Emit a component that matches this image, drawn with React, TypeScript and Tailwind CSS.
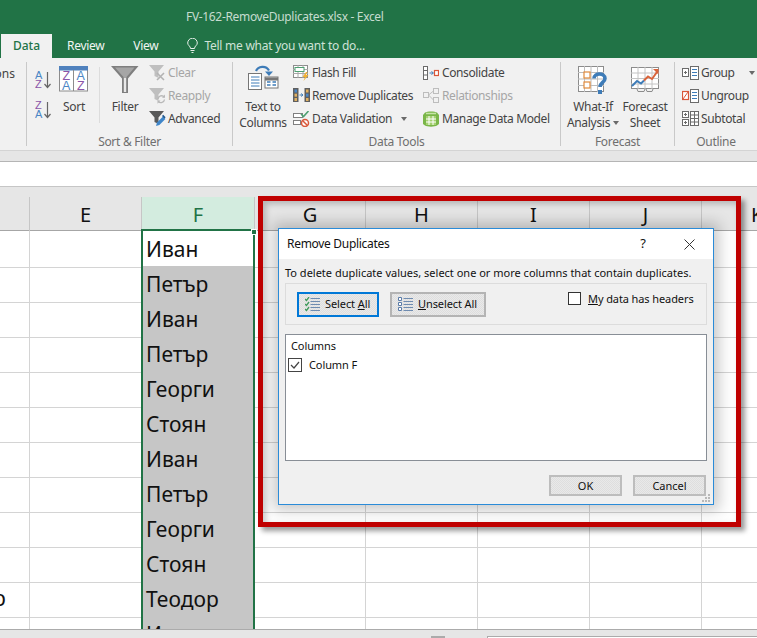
import React from "react";

const ui = "font-['Open_Sans','Noto_Sans',sans-serif]";

const AZ = ({ flip }: { flip?: boolean }) => (
  <svg width="16" height="21" viewBox="0 0 16 21" className="block">
    <text x="0" y="10" fontSize="11" fontFamily="Liberation Sans" fill={flip ? "#8a55a8" : "#4a86c5"}>{flip ? "Z" : "A"}</text>
    <text x="0" y="18.500" fontSize="11" fontFamily="Liberation Sans" fill={flip ? "#4a86c5" : "#8a55a8"}>{flip ? "A" : "Z"}</text>
    <path d="M12.500 3v15M9.500 15l3 3.500 3-3.500" fill="none" stroke="#666" strokeWidth="1.200" />
  </svg>
);

const SortIcon = () => (
  <svg width="30" height="27" viewBox="0 0 30 27" className="block">
    <rect x="0.500" y="0.500" width="28" height="24.500" fill="#fff" stroke="#8c8c8c" />
    <rect x="0" y="0" width="29" height="4.500" fill="#4f81bd" />
    <path d="M14.500 4v21" stroke="#8c8c8c" />
    <g fontSize="12.500" fontFamily="Liberation Sans">
      <text x="3.500" y="14.300" fill="#8a55a8">Z</text>
      <text x="17.500" y="14.300" fill="#4a86c5">A</text>
      <text x="3" y="24" fill="#4a86c5">A</text>
      <text x="18" y="24" fill="#8a55a8">Z</text>
    </g>
  </svg>
);

const FilterIcon = () => (
  <svg width="28" height="28" viewBox="0 0 28 28" className="block">
    <path d="M0 0h27.500L17 12.500V27h-6V12.500z" fill="#7f7f7f" />
    <path d="M4 1.500h19.500L15.500 11v15h-3V11z" fill="#a6a6a6" />
    <path d="M13 12h2v14h-2z" fill="#e8e8e8" />
  </svg>
);

const Funnel = ({ c }: { c: string }) => <path d="M0 0h15L9.500 6.500V13l-4-2V6.500z" fill={c} />;

const ClearIcon = () => (
  <svg width="17" height="16" viewBox="0 0 17 16" className="block">
    <Funnel c="#bfbfbf" />
    <path d="M8 8l7 7M15 8l-7 7" stroke="#b3b3b3" strokeWidth="1.600" />
  </svg>
);

const ReapplyIcon = () => (
  <svg width="17" height="16" viewBox="0 0 17 16" className="block">
    <Funnel c="#bfbfbf" />
    <path d="M9 11a3.600 3.600 0 0 1 6.300-2M15.500 11.500a3.600 3.600 0 0 1-6.200 2" fill="none" stroke="#b8b8b8" strokeWidth="1.300" />
    <path d="M16 6.500v3.300h-3zM8.500 15.800v-3.300h3z" fill="#b8b8b8" />
  </svg>
);

const AdvancedIcon = () => (
  <svg width="17" height="16" viewBox="0 0 17 16" className="block">
    <Funnel c="#595959" />
    <path d="M7 15l1-3.500 6-6 2.400 2.400-6 6z" fill="#3f86c9" />
    <path d="M13 5l1.200-1.200 2.400 2.400L15.400 7.400z" fill="#20588f" />
  </svg>
);

const TextColumnsIcon = () => (
  <svg width="31" height="26" viewBox="0 0 31 26" className="block">
    <path d="M8 6c2-5 10-6 13-.5" fill="none" stroke="#3e7cb8" strokeWidth="2.200" />
    <path d="M17 6.500h8l-4 4.500z" fill="#3e7cb8" />
    <rect x="0.500" y="8.500" width="13" height="16" fill="#fff" stroke="#767676" />
    <path d="M3 12h8.500M3 15h8.500M3 18h8.500M3 21h8.500" stroke="#3e7cb8" />
    <rect x="17" y="12" width="13" height="11" fill="#fff" stroke="#767676" />
    <path d="M17 14h13" stroke="#767676" strokeWidth="3" />
    <path d="M19 17h3.500M24.500 17h3.500M19 20h3.500M24.500 20h3.500" stroke="#3e7cb8" strokeWidth="1.600" />
  </svg>
);

const FlashFillIcon = () => (
  <svg width="17" height="16" viewBox="0 0 17 16" className="block">
    <rect x="0.500" y="0.500" width="14" height="12" fill="#fff" stroke="#8c8c8c" />
    <path d="M0 4.500h15M0 8.500h15M5 0v13M10 0v13" stroke="#a8a8a8" />
    <rect x="2" y="2.500" width="9" height="4" fill="#fff" stroke="#4ea072" />
    <path d="M13 7l-3.500 5H12l-1.500 4 5-6H13l1.500-3z" fill="#f2b233" />
  </svg>
);

const RemoveDupIcon = () => (
  <svg width="17" height="15" viewBox="0 0 17 15" className="block">
    <rect x="0" y="0" width="5.500" height="14" fill="#5f5f5f" />
    <rect x="1.500" y="1.500" width="2.500" height="3" fill="#4a86c5" />
    <rect x="1.500" y="5.700" width="2.500" height="3" fill="#e0b060" />
    <rect x="1.500" y="10" width="2.500" height="3" fill="#e0b060" />
    <rect x="11.500" y="0" width="5.500" height="14" fill="#5f5f5f" />
    <rect x="13" y="1.500" width="2.500" height="3" fill="#e0b060" />
    <rect x="13" y="5.700" width="2.500" height="3" fill="#4a86c5" />
    <rect x="13" y="10" width="2.500" height="3" fill="#e0b060" />
    <path d="M6.500 7h3M8.200 5.500L10 7 8.200 8.500" fill="none" stroke="#3e7cb8" />
  </svg>
);

const ValidationIcon = () => (
  <svg width="17" height="16" viewBox="0 0 17 16" className="block">
    <rect x="0.500" y="2.500" width="9" height="4" fill="#fff" stroke="#7f7f7f" />
    <rect x="0.500" y="9.500" width="7" height="4" fill="#fff" stroke="#7f7f7f" />
    <path d="M8 3l2.500 2.500L15.500 0" fill="none" stroke="#4ea072" strokeWidth="1.600" />
    <circle cx="12" cy="12" r="3.500" fill="#fff" stroke="#d9573a" strokeWidth="1.500" />
    <path d="M9.500 9.500l5 5" stroke="#d9573a" strokeWidth="1.500" />
  </svg>
);

const ConsolidateIcon = () => (
  <svg width="16" height="14" viewBox="0 0 16 14" className="block">
    <rect x="0.500" y="0.500" width="4" height="13" fill="#fff" stroke="#6b6b6b" />
    <path d="M0 4.500h5M0 9h5" stroke="#6b6b6b" />
    <path d="M6.500 7h3.500M8.500 5.500L10.500 7 8.500 8.500" fill="none" stroke="#3e7cb8" />
    <rect x="11.500" y="4.500" width="4" height="5" fill="#fff" stroke="#d9573a" strokeWidth="1.200" />
  </svg>
);

const RelationshipsIcon = () => (
  <svg width="16" height="15" viewBox="0 0 16 15" className="block">
    <g fill="#f1f1f1" stroke="#bdbdbd">
      <rect x="0.500" y="4.500" width="5" height="5" />
      <rect x="10.500" y="0.500" width="5" height="5" />
      <rect x="10.500" y="9.500" width="5" height="5" />
    </g>
    <path d="M5.500 7L10.500 3M5.500 7l5 5" stroke="#bdbdbd" />
  </svg>
);

const DataModelIcon = () => (
  <svg width="16" height="16" viewBox="0 0 16 16" className="block">
    <path d="M2 1.500C4 0 12 0 14 1.500L16 4v9l-2 1.500C12 16 4 16 2 14.500L0 13V4z" fill="#7ab648" />
    <path d="M3 5h10v9H3z" fill="#a4d070" />
    <path d="M6 5v9M10 5v9M3 8h10M3 11h10" stroke="#fff" />
    <path d="M3 2.500h10" stroke="#c6e4a6" strokeWidth="1.500" />
  </svg>
);

const WhatIfIcon = () => (
  <svg width="30" height="30" viewBox="0 0 30 30" className="block">
    <rect x="0.500" y="0.500" width="25" height="25" fill="#fff" stroke="#8c8c8c" />
    <path d="M0 6.500h26M0 13h26M0 19.500h26M6.500 0v26M13 0v26M19.500 0v26" stroke="#bdbdbd" />
    <rect x="6" y="6" width="6" height="6" fill="#fff" stroke="#e08a3c" strokeWidth="1.200" />
    <rect x="6" y="16" width="6" height="6" fill="#fff" stroke="#e08a3c" strokeWidth="1.200" />
    <path d="M16 12.500c0-6 11-6 11 0 0 4-5 4-5 8.500" fill="none" stroke="#3e7cb8" strokeWidth="3.600" />
    <rect x="20" y="24" width="4" height="4" fill="#3e7cb8" />
  </svg>
);

const ForecastIcon = () => (
  <svg width="29" height="26" viewBox="0 0 29 26" className="block">
    <rect x="0.500" y="1.500" width="27" height="21" fill="#fff" stroke="#8c8c8c" />
    <path d="M0 7h28M0 12.500h28M0 18h28M7 1v22M14 1v22M21 1v22" stroke="#c4c4c4" />
    <path d="M1 20l5-5 4 2.500 3-3" fill="none" stroke="#3e7cb8" strokeWidth="2" />
    <path d="M13 14.500l4-4 4 2.500 5-7" fill="none" stroke="#d9633a" strokeWidth="2" />
    <path d="M22 3h5.500v5.500z" fill="#d9633a" />
    <path d="M6 23l1 2.500h6l1-2.500M15 23l1 2.500h5l1-2.500" fill="none" stroke="#8c8c8c" />
  </svg>
);

const ListBox = () => (
  <g>
    <rect x="8.500" y="0.500" width="8" height="13" fill="#fff" stroke="#6b6b6b" />
    <path d="M10 3.500h5M10 6.500h5M10 9.500h5" stroke="#3e7cb8" />
  </g>
);

const GroupIcon = () => (
  <svg width="17" height="14" viewBox="0 0 17 14" className="block">
    <rect x="0.500" y="2.500" width="6" height="8" fill="#fff" stroke="#6b6b6b" />
    <path d="M2 6.500h3M3.500 5v3" stroke="#6b6b6b" />
    <ListBox />
  </svg>
);

const UngroupIcon = () => (
  <svg width="17" height="14" viewBox="0 0 17 14" className="block">
    <rect x="0.500" y="2.500" width="6" height="8" fill="#fff" stroke="#d9573a" strokeWidth="1.200" />
    <path d="M1 10l5-7" stroke="#d9573a" />
    <ListBox />
  </svg>
);

const SubtotalIcon = () => (
  <svg width="17" height="15" viewBox="0 0 17 15" className="block">
    <rect x="0.500" y="0.500" width="6" height="6" fill="#fff" stroke="#6b6b6b" />
    <rect x="0.500" y="8.500" width="6" height="6" fill="#fff" stroke="#6b6b6b" />
    <path d="M2 3.500h3M3.500 2v3M2 11.500h3M3.500 10v3" stroke="#6b6b6b" />
    <rect x="8.500" y="0.500" width="8" height="14" fill="#fff" stroke="#6b6b6b" />
    <path d="M8 4h9M8 7.500h9M8 11h9M12.500 0v15" stroke="#6b6b6b" />
  </svg>
);

const Bulb = () => (
  <svg width="11" height="15" viewBox="0 0 11 15" className="block">
    <path d="M3.500 10.500C3.500 8 .7 7.500.7 5a4.800 4.800 0 0 1 9.600 0c0 2.500-2.800 3-2.800 5.500z" fill="none" stroke="#e8f0ea" />
    <path d="M3.500 12.500h4M4.500 14.500h2" stroke="#e8f0ea" />
  </svg>
);

const Caret = () => <span className="inline-block w-0 h-0 border-x-[3.5px] border-x-transparent border-t-[4px] border-t-[#6a6a6a]" />;

const SelectAllIcon = () => (
  <svg width="16" height="15" viewBox="0 0 16 15" className="block">
    <path d="M0 2l1.500 1.500L4 0M0 7l1.500 1.500L4 5M0 12l1.500 1.500L4 10" fill="none" stroke="#3f9a5c" strokeWidth="1.300" />
    <path d="M5.500 1.500H15M5.500 4.500H15M5.500 7.500H15M5.500 10.500H15M5.500 13.500H15" stroke="#6f8cb0" />
  </svg>
);

const UnselectAllIcon = () => (
  <svg width="16" height="15" viewBox="0 0 16 15" className="block">
    <path d="M.5.5h3v3h-3zM.5 5.500h3v3h-3zM.5 10.500h3v3h-3z" fill="#fff" stroke="#5b7ca8" />
    <path d="M5.500 1.500H15M5.500 4.500H15M5.500 7.500H15M5.500 10.500H15M5.500 13.500H15" stroke="#6f8cb0" />
  </svg>
);

const Sep = () => <div className="w-px h-[84px] mt-1 bg-[#c9c9c9] shrink-0" />;

const GroupLabel = ({ children }: { children: string }) => (
  <div className="h-[17px] leading-[17px] text-center text-[#6f6f6f] tracking-[-0.3px]">{children}</div>
);

const Small = ({ icon, text, off, caret }: { icon: React.ReactNode; text: string; off?: boolean; caret?: string }) => (
  <div className={`h-[23px] flex items-center whitespace-nowrap tracking-[-0.38px] ${off ? "text-[#a6a6a6]" : "text-[#444]"}`}>
    <div className="w-[19px] shrink-0">{icon}</div>
    <span>{text}</span>
    {caret && <span className={`flex ${caret}`}><Caret /></span>}
  </div>
);

const Big = ({ w, icon, iconCls, children }: { w: string; icon: React.ReactNode; iconCls?: string; children: React.ReactNode }) => (
  <div className={`${w} shrink-0 flex flex-col items-center text-[#444] leading-4 whitespace-nowrap tracking-[-0.3px]`}>
    <div className={`h-[38px] ${iconCls ?? "pt-[3px]"}`}>{icon}</div>
    {children}
  </div>
);

const Ribbon = () => (
  <div className={`h-[92px] bg-[#f1f1f1] flex text-[12px] ${ui}`}>
    <div className="w-[26px] shrink-0 overflow-hidden flex justify-end">
      <div className="pr-[11px] pt-[4px] h-[23px] text-[#444] leading-[23px]">ons</div>
    </div>
    <Sep />
    <div className="w-[205px] shrink-0 flex flex-col">
      <div className="h-[75px] pt-[3px] flex">
        <div className="ml-[8px] w-[16px] shrink-0 pt-[8px] flex flex-col gap-[9px]">
          <AZ />
          <AZ flip />
        </div>
        <Big w="w-[30px] ml-[8px]" icon={<SortIcon />} iconCls="pt-[5px]">Sort</Big>
        <div className="w-px h-[56px] mt-[6px] ml-[10px] bg-[#dcdcdc]" />
        <Big w="w-[34px] ml-[8px]" icon={<FilterIcon />} iconCls="pt-[5px]">Filter</Big>
        <div className="ml-[7px]">
          <Small icon={<ClearIcon />} text="Clear" off />
          <Small icon={<ReapplyIcon />} text="Reapply" off />
          <Small icon={<AdvancedIcon />} text="Advanced" />
        </div>
      </div>
      <GroupLabel>{"Sort & Filter"}</GroupLabel>
    </div>
    <Sep />
    <div className="w-[327px] shrink-0 flex flex-col">
      <div className="h-[75px] pt-[3px] flex">
        <Big w="w-[50px] ml-[5px]" icon={<TextColumnsIcon />} iconCls="pt-[4px]">
          <span>Text to</span>
          <span>Columns</span>
        </Big>
        <div className="ml-[5px] w-[130px] shrink-0">
          <Small icon={<FlashFillIcon />} text="Flash Fill" />
          <Small icon={<RemoveDupIcon />} text="Remove Duplicates" />
          <Small icon={<ValidationIcon />} text="Data Validation" caret="ml-[9px]" />
        </div>
        <div>
          <Small icon={<ConsolidateIcon />} text="Consolidate" />
          <Small icon={<RelationshipsIcon />} text="Relationships" off />
          <Small icon={<DataModelIcon />} text="Manage Data Model" />
        </div>
      </div>
      <GroupLabel>Data Tools</GroupLabel>
    </div>
    <Sep />
    <div className="w-[113px] shrink-0 flex flex-col">
      <div className="h-[75px] pt-[3px] flex">
        <Big w="w-[64px]" icon={<WhatIfIcon />} iconCls="pt-[5px]">
          <span>What-If</span>
          <span className="flex items-center gap-[3px]">Analysis <Caret /></span>
        </Big>
        <Big w="w-[40px]" icon={<ForecastIcon />} iconCls="pt-[5px]">
          <span>Forecast</span>
          <span>Sheet</span>
        </Big>
      </div>
      <GroupLabel>Forecast</GroupLabel>
    </div>
    <Sep />
    <div className="flex-1 flex flex-col">
      <div className="h-[75px] pt-[3px] pl-[7px]">
        <Small icon={<GroupIcon />} text="Group" caret="ml-[14px]" />
        <Small icon={<UngroupIcon />} text="Ungroup" />
        <Small icon={<SubtotalIcon />} text="Subtotal" />
      </div>
      <GroupLabel>Outline</GroupLabel>
    </div>
  </div>
);

const names = ["Иван", "Петър", "Иван", "Петър", "Георги", "Стоян", "Иван", "Петър", "Георги", "Стоян", "Теодор", "Иван"];
const cols = "grid grid-cols-[30px_111px_114px_111px_112px_112px_112px_55px]";
const line = "border-r border-b border-[#d4d4d4]";

const Sheet = () => (
  <div className="h-[442px] overflow-hidden bg-white font-['Liberation_Sans',sans-serif] text-[#111]">
    <div className="h-[10px] bg-[#e6e6e6]" />
    <div className={`${cols} h-[34px] bg-[#e6e6e6] text-[20px] leading-[35px] text-center border-b border-[#a6a6a6]`}>
      <div className="border-r border-[#c6c6c6]" />
      <div>E</div>
      <div className="bg-[#d3ecdf] text-[#217346] border-x border-[#c6c6c6]">F</div>
      {["G", "H", "I", "J"].map((c) => (
        <div key={c} className="border-r border-[#c6c6c6]">{c}</div>
      ))}
      <div className="text-left pl-[49px]">K</div>
    </div>
    <div className="relative">
      <div className="absolute left-[141px] top-[-2px] w-[114px] h-[2px] bg-[#217346]" />
      <div className="absolute left-[251px] top-[-2px] w-[6px] h-[6px] bg-[#217346] border border-white" />
      {names.map((n, i) => (
        <div key={i} className={`${cols} h-[35px]`}>
          <div className={`${line} overflow-hidden text-[21px] leading-[34px]`}>
            {i === 10 && <span className="block -ml-[7px]">р</span>}
          </div>
          <div className="border-b border-[#d4d4d4]" />
          <div className={`border-x-2 border-x-[#217346] border-b border-b-[#aeaeae] pl-[3px] text-[21px] leading-[36px] ${i === 0 ? "bg-white" : "bg-[#c6c6c6]"}`}>{n}</div>
          {[0, 1, 2, 3].map((c) => (
            <div key={c} className={line} />
          ))}
          <div className="border-b border-[#d4d4d4]" />
        </div>
      ))}
    </div>
  </div>
);

const dots = "bg-[repeating-conic-gradient(#e9e9e9_0_25%,#dedede_0_50%)] bg-size-[2px_2px]";

const Dialog = () => (
  <div className={`absolute left-[278px] top-[228px] w-[436px] h-[277px] bg-[#f0f0f0] border border-[#2a8bd8] shadow-[0_0_14px_5px_rgba(0,0,0,0.22)] flex flex-col text-[11px] text-[#111] ${ui}`}>
    <div className="h-[30px] bg-white flex items-center pl-[8px] text-[12px] shrink-0">
      <span className="tracking-[-0.3px]">Remove Duplicates</span>
      <span className="ml-auto mr-[38px] text-[13px]">?</span>
      <svg width="11" height="11" viewBox="0 0 11 11" className="mr-[18px] block">
        <path d="M.5.5l10 10M10.500.5l-10 10" stroke="#333" />
      </svg>
    </div>
    <div className="h-[24px] pl-[6px] leading-[28px] whitespace-nowrap">To delete duplicate values, select one or more columns that contain duplicates.</div>
    <div className="mx-[6px] h-[42px] border border-[#dcdcdc] flex pl-[11px] pt-[8px] shrink-0 tracking-[-0.1px]">
      <div className={`w-[82px] h-[25px] border-2 border-[#0078d7] flex items-center pl-[6px] gap-[4px] pb-px ${dots}`}>
        <SelectAllIcon />
        <span>Select <span className="underline">A</span>ll</span>
      </div>
      <div className={`ml-[11px] w-[96px] h-[25px] border-2 border-[#b4b4b4] flex items-center pl-[6px] gap-[4px] pb-px ${dots}`}>
        <UnselectAllIcon />
        <span><span className="underline">U</span>nselect All</span>
      </div>
      <div className="ml-[82px] w-[13px] h-[13px] border border-[#333] bg-white shrink-0" />
      <div className="ml-[7px] leading-[13px] whitespace-nowrap"><span className="underline">M</span>y data has headers</div>
    </div>
    <div className="mx-[6px] mt-[9px] h-[127px] border border-[#888e96] bg-white shrink-0 pl-[5px] pt-[3px] tracking-[-0.1px]">
      <div className="leading-[15px]">Columns</div>
      <div className="mt-[4px] flex items-center">
        <svg width="14" height="14" viewBox="0 0 14 14" className="block mr-[7px] -ml-[3px]">
          <rect x="0.500" y="0.500" width="13" height="13" fill="#fff" stroke="#444" />
          <path d="M3 7l3 3 5-6" fill="none" stroke="#444" strokeWidth="1.200" />
        </svg>
        <span>Column F</span>
      </div>
    </div>
    <div className="flex justify-end gap-[11px] mt-[14px] mr-[7px]">
      <div className={`w-[73px] h-[21px] border-2 border-[#bdbdbd] text-center leading-[18px] ${dots}`}>OK</div>
      <div className={`w-[73px] h-[21px] border-2 border-[#bdbdbd] text-center leading-[18px] ${dots}`}>Cancel</div>
    </div>
    <svg width="9" height="8" viewBox="0 0 9 8" className="absolute right-[2px] bottom-[2px] block">
      <path d="M6 0h2v2H6zM3 3h2v2H3zM6 3h2v2H6zM0 6h2v2H0zM3 6h2v2H3zM6 6h2v2H6z" fill="#b8b8b8" />
    </svg>
  </div>
);

const App = () => {
  return (
    <div className="relative w-[757px] h-[638px] overflow-hidden bg-white">
      <div className={`h-[34px] bg-[#217346] pl-[186px] text-[12px] leading-[34px] tracking-[-0.33px] text-[#c6dccf] ${ui}`}>
        FV-162-RemoveDuplicates.xlsx - Excel
      </div>
      <div className={`h-[24px] bg-[#217346] flex text-[12px] text-[#f1f6f3] ${ui}`}>
        <div className="ml-px w-[51px] bg-[#f1f1f1] text-[#217346] text-center leading-[24px] font-medium">Data</div>
        <div className="ml-[15px] leading-[24px] tracking-[-0.3px]">Review</div>
        <div className="ml-[29px] leading-[24px] tracking-[-0.3px]">View</div>
        <div className="ml-[29px] mt-[4px]"><Bulb /></div>
        <div className="ml-[6px] leading-[24px] text-[#cfe2d7] tracking-[-0.25px]">Tell me what you want to do...</div>
      </div>
      <Ribbon />
      <div className="h-[12px] bg-[#e6e6e6] border-t border-[#d4d4d4] border-b border-b-[#b5b5b5]" />
      <div className="h-[25px] bg-white border-b border-[#c6c6c6]" />
      <Sheet />
      <div className="h-[9px] bg-[#e6e6e6] border-t border-[#ababab] flex">
        <div className="ml-[431px] mt-[6px] w-[14px] bg-white border border-[#ababab]" />
        <div className="ml-[42px] mt-[6px] flex-1 bg-white border-t border-l border-[#ababab]" />
      </div>
      <div className="absolute left-[258px] top-[196px] w-[483px] h-[331px] border-[5px] border-[#c00000] shadow-[4px_4px_5px_rgba(0,0,0,0.4),inset_3px_3px_6px_rgba(0,0,0,0.22)]" />
      <Dialog />
    </div>
  );
};

export default App;
